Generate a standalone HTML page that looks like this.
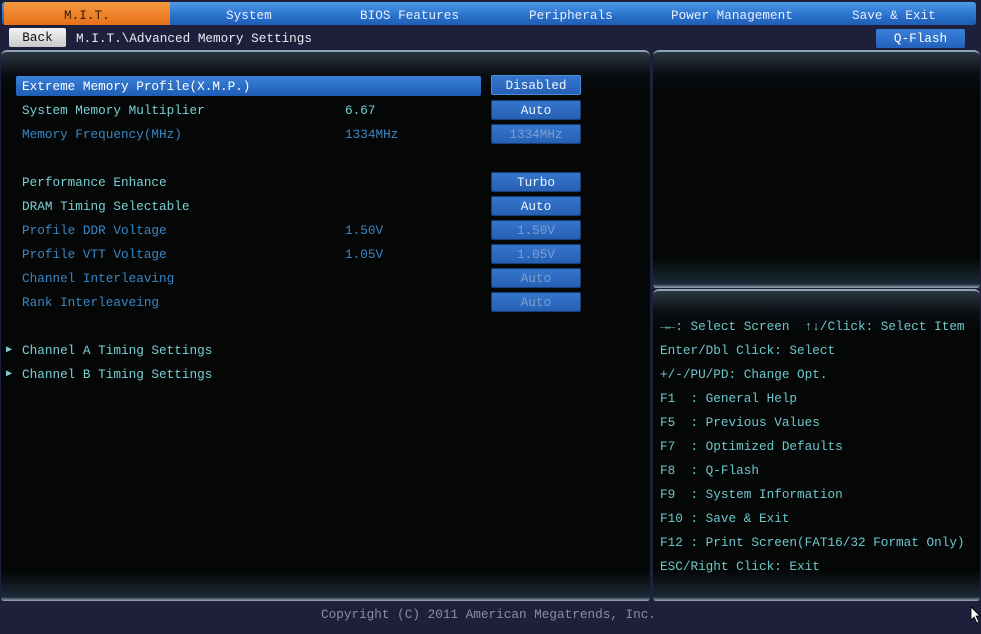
<!DOCTYPE html>
<html><head><style>
*{margin:0;padding:0;box-sizing:border-box}
body{width:981px;height:634px;background:#1e1f3b;font-family:"Liberation Mono",monospace;font-size:12.7px;position:relative;overflow:hidden}
.a{position:absolute;white-space:pre;line-height:18px}
.tabs{position:absolute;left:2px;top:2px;width:974px;height:23px;background:linear-gradient(#4a9ae6,#2a70cc 60%,#1f5eb4);border-radius:3px}
.tab{position:absolute;top:5px;color:#e8f0ff;line-height:18px}
.panel{position:absolute;background:linear-gradient(#2a3540 0,#0a0e12 22px,#050707 40px,#050707 calc(100% - 30px),#1a2a36 calc(100% - 4px),#9ab 100%);border-top:2px solid #8fa4b4;border-radius:6px 6px 3px 3px}
.btn{position:absolute;left:491px;width:90px;height:20px;background:linear-gradient(#3676cc,#2660b4);border:1px solid #1a3d7a;border-radius:2px;color:#eef4ff;text-align:center;line-height:19px}
.dis{color:#7aa0d2}
.l{left:22px;color:#7ccfd2}
.d{color:#3a86c4}
.h{position:absolute;left:660px;color:#6fc7cc}
</style></head><body>
<div class="tabs">
<div style="position:absolute;left:2px;top:0;width:166px;height:23px;background:linear-gradient(#f59a40,#e8701a);border-radius:3px 0 0 0"></div>
<div class="tab" style="left:62px;color:#3a1800">M.I.T.</div>
<div class="tab" style="left:224px">System</div>
<div class="tab" style="left:358px">BIOS Features</div>
<div class="tab" style="left:527px">Peripherals</div>
<div class="tab" style="left:669px">Power Management</div>
<div class="tab" style="left:850px">Save &amp; Exit</div>
</div>
<div style="position:absolute;left:9px;top:28px;width:57px;height:19px;background:linear-gradient(#f4f4f4,#c8c8c8);border-radius:2px;color:#111;text-align:center;line-height:20px">Back</div>
<div class="a" style="left:76px;top:30px;color:#e8ecf4">M.I.T.\Advanced Memory Settings</div>
<div style="position:absolute;left:876px;top:29px;width:89px;height:19px;background:linear-gradient(#3a80d8,#2462bc);border-radius:2px;color:#fff;text-align:center;line-height:20px">Q-Flash</div>

<div class="panel" style="left:1px;top:50px;width:649px;height:551px"></div>
<div class="panel" style="left:653px;top:50px;width:327px;height:238px"></div>
<div class="panel" style="left:653px;top:289px;width:327px;height:312px"></div>

<div style="position:absolute;left:16px;top:76px;width:465px;height:20px;background:linear-gradient(#3b82d8,#1e5cb4);border-radius:2px"></div>
<div class="a l" style="top:78px;color:#fff">Extreme Memory Profile(X.M.P.)</div>
<div class="btn" style="top:75px;border-color:#4a90e0">Disabled</div>

<div class="a l" style="top:102px">System Memory Multiplier</div><div class="a" style="left:345px;top:102px;color:#7ccfd2">6.67</div><div class="btn" style="top:100px">Auto</div>
<div class="a l d" style="top:126px">Memory Frequency(MHz)</div><div class="a d" style="left:345px;top:126px">1334MHz</div><div class="btn dis" style="top:124px">1334MHz</div>

<div class="a l" style="top:174px">Performance Enhance</div><div class="btn" style="top:172px">Turbo</div>
<div class="a l" style="top:198px">DRAM Timing Selectable</div><div class="btn" style="top:196px">Auto</div>
<div class="a l d" style="top:222px">Profile DDR Voltage</div><div class="a d" style="left:345px;top:222px">1.50V</div><div class="btn dis" style="top:220px">1.50V</div>
<div class="a l d" style="top:246px">Profile VTT Voltage</div><div class="a d" style="left:345px;top:246px">1.05V</div><div class="btn dis" style="top:244px">1.05V</div>
<div class="a l d" style="top:270px">Channel Interleaving</div><div class="btn dis" style="top:268px">Auto</div>
<div class="a l d" style="top:294px">Rank Interleaveing</div><div class="btn dis" style="top:292px">Auto</div>

<div class="a" style="left:6px;top:342px;color:#7ccfd2;font-size:10px">▶</div><div class="a l" style="top:342px">Channel A Timing Settings</div>
<div class="a" style="left:6px;top:366px;color:#7ccfd2;font-size:10px">▶</div><div class="a l" style="top:366px">Channel B Timing Settings</div>

<div class="a h" style="top:318px">→←: Select Screen  ↑↓/Click: Select Item</div>
<div class="a h" style="top:342px">Enter/Dbl Click: Select</div>
<div class="a h" style="top:366px">+/-/PU/PD: Change Opt.</div>
<div class="a h" style="top:390px">F1  : General Help</div>
<div class="a h" style="top:414px">F5  : Previous Values</div>
<div class="a h" style="top:438px">F7  : Optimized Defaults</div>
<div class="a h" style="top:462px">F8  : Q-Flash</div>
<div class="a h" style="top:486px">F9  : System Information</div>
<div class="a h" style="top:510px">F10 : Save &amp; Exit</div>
<div class="a h" style="top:534px">F12 : Print Screen(FAT16/32 Format Only)</div>
<div class="a h" style="top:558px">ESC/Right Click: Exit</div>

<div class="a" style="left:321px;top:606px;color:#8a8ea4">Copyright (C) 2011 American Megatrends, Inc.</div>
<svg style="position:absolute;left:970px;top:606px" width="10" height="18"><path d="M1 1 L1 14 L4 11 L7 17 L9 16 L6 10 L10 10 Z" fill="#fff" stroke="#000" stroke-width="0.8"/></svg>
</body></html>
